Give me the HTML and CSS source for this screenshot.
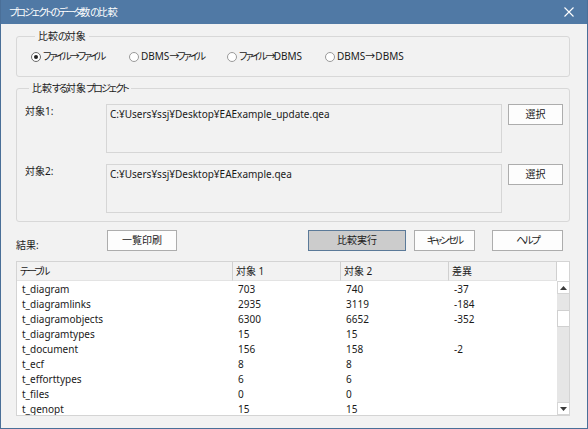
FILE: index.html
```html
<!DOCTYPE html>
<html lang="ja">
<head>
<meta charset="utf-8">
<title>プロジェクトのデータ数の比較</title>
<link rel="stylesheet" href="styles.css">
</head>
<body>
<div class="window">
  <div class="titlebar">
    <span class="title"><span class="k">プロジェクトのデータ</span>数<span class="k">の</span>比較</span>
    <svg class="close" width="10" height="10" viewBox="0 0 10 10"><path d="M0.5 0.5L9.5 9.5M9.5 0.5L0.5 9.5" stroke="#ffffff" stroke-width="1.1" fill="none"/></svg>
  </div>
  <div class="content">
    <fieldset class="group group-target">
      <legend>比較<span class="k">の</span>対象</legend>
      <div class="radios">
        <label class="radio"><span class="dot checked"></span><span class="k">ファイル→ファイル</span></label>
        <label class="radio"><span class="dot"></span>DBMS<span class="k">→ファイル</span></label>
        <label class="radio"><span class="dot"></span><span class="k">ファイル→</span>DBMS</label>
        <label class="radio"><span class="dot"></span>DBMS→DBMS</label>
      </div>
    </fieldset>
    <fieldset class="group group-projects">
      <legend>比較<span class="k">する</span>対象<span class="k">プロジェクト</span></legend>
      <div class="proj-row">
        <span class="proj-label">対象1:</span>
        <div class="path-box">C:¥Users¥ssj¥Desktop¥EAExample_update.qea</div>
        <button class="btn btn-select">選択</button>
      </div>
      <div class="proj-row">
        <span class="proj-label">対象2:</span>
        <div class="path-box">C:¥Users¥ssj¥Desktop¥EAExample.qea</div>
        <button class="btn btn-select">選択</button>
      </div>
    </fieldset>
    <div class="action-row">
      <span class="result-label">結果:</span>
      <button class="btn btn-print">一覧印刷</button>
      <span class="spacer"></span>
      <button class="btn btn-run">比較実行</button>
      <button class="btn btn-cancel"><span class="k">キャンセル</span></button>
      <button class="btn btn-help"><span class="k">ヘルプ</span></button>
    </div>
    <div class="list">
      <div class="list-head">
        <div class="th"><span class="k">テーブル</span></div>
        <div class="th">対象 1</div>
        <div class="th">対象 2</div>
        <div class="th">差異</div>
        <div class="th-blank"></div>
      </div>
      <div class="list-body">
        <div class="rows">
          <div class="row"><span>t_diagram</span><span>703</span><span>740</span><span>-37</span></div>
          <div class="row"><span>t_diagramlinks</span><span>2935</span><span>3119</span><span>-184</span></div>
          <div class="row"><span>t_diagramobjects</span><span>6300</span><span>6652</span><span>-352</span></div>
          <div class="row"><span>t_diagramtypes</span><span>15</span><span>15</span><span></span></div>
          <div class="row"><span>t_document</span><span>156</span><span>158</span><span>-2</span></div>
          <div class="row"><span>t_ecf</span><span>8</span><span>8</span><span></span></div>
          <div class="row"><span>t_efforttypes</span><span>6</span><span>6</span><span></span></div>
          <div class="row"><span>t_files</span><span>0</span><span>0</span><span></span></div>
          <div class="row"><span>t_genopt</span><span>15</span><span>15</span><span></span></div>
        </div>
        <div class="scrollbar">
          <div class="sb-btn"><svg width="7" height="4" viewBox="0 0 7 4"><path d="M0 4L3.5 0L7 4Z" fill="#3a3a3a"/></svg></div>
          <div class="sb-track">
            <div class="sb-gap"></div>
            <div class="sb-thumb"></div>
          </div>
          <div class="sb-btn"><svg width="7" height="4" viewBox="0 0 7 4"><path d="M0 0L3.5 4L7 0Z" fill="#3a3a3a"/></svg></div>
        </div>
      </div>
    </div>
  </div>
</div>
</body>
</html>
```
FILE: styles.css
```css
* { box-sizing: border-box; }
html, body { margin: 0; padding: 0; }
body {
  font-family: "Noto Sans", "Noto Sans CJK JP", sans-serif;
  font-size: 10px;
  font-feature-settings: "palt" 1;
  color: #1a1a1a;
  background: #f0f0f0;
}
.k { letter-spacing: -2px; }
.window {
  width: 588px;
  height: 429px;
  background: #f2f2f2;
  border: 1px solid #4a6f98;
  border-top: none;
  overflow: hidden;
}
.titlebar {
  height: 24px;
  background: #5079a5;
  color: #ffffff;
  display: flex;
  align-items: center;
  justify-content: space-between;
  padding: 0 14px 0 9px;
  margin: 0 -1px;
}
.title { line-height: 14px; white-space: nowrap; }
.close { display: block; }
.content {
  padding: 5px 17px 0 15px;
}
.group {
  margin: 0;
  border: 1px solid #d8d8d8;
  border-radius: 3px;
  min-width: 0;
}
.group legend {
  padding: 0 3px;
  margin-left: 4px;
  line-height: 15px;
  color: #1a1a1a;
  white-space: nowrap;
}
.group-target {
  padding: 5px 0 12px 14px;
}
.radios { display: flex; }
.radio {
  width: 98px;
  flex: none;
  display: flex;
  align-items: center;
  line-height: 15px;
  white-space: nowrap;
}
.dot {
  width: 10px;
  height: 10px;
  border-radius: 50%;
  border: 1px solid #9a9a9a;
  background: #ffffff;
  margin-right: 2px;
  flex: none;
  display: flex;
  align-items: center;
  justify-content: center;
}
.dot.checked { border-color: #6a6a6a; }
.dot.checked::after {
  content: "";
  width: 4px;
  height: 4px;
  border-radius: 50%;
  background: #222222;
}
.group-projects {
  margin-top: 4px;
  padding: 8px 6px 8px 8px;
}
.proj-row {
  display: flex;
  align-items: flex-start;
}
.proj-row + .proj-row { margin-top: 11px; }
.proj-label {
  width: 81px;
  line-height: 15px;
  flex: none;
}
.path-box {
  width: 396px;
  height: 49px;
  border: 1px solid #d6d6d6;
  background: #f2f2f2;
  padding: 2px 3px;
  line-height: 15px;
  flex: none;
  white-space: nowrap;
  overflow: hidden;
}
.btn {
  font-family: inherit;
  font-size: inherit;
  font-feature-settings: "palt" 1;
  color: #1a1a1a;
  background: #fdfdfd;
  border: 1px solid #adadad;
  border-radius: 0;
  padding: 0;
  height: 21px;
  line-height: 19px;
  flex: none;
  white-space: nowrap;
}
.btn-select { width: 55px; margin-left: 6px; }
.action-row {
  display: flex;
  align-items: flex-start;
  margin-top: 8px;
  height: 31px;
  padding-right: 7px;
}
.result-label {
  width: 91px;
  flex: none;
  margin-top: 8px;
  line-height: 15px;
}
.btn-print { width: 70px; }
.spacer { flex: 1; }
.btn-run {
  width: 98px;
  background: #cccccc;
  border-color: #5b7a99;
}
.btn-cancel { width: 61px; margin-left: 8px; }
.btn-help { width: 71px; margin-left: 17px; }
.list {
  border: 1px solid #d4d4d4;
  background: #ffffff;
  height: 155px;
  overflow: hidden;
}
.list-head {
  display: grid;
  grid-template-columns: 216px 108px 108px 108px 1fr;
  height: 19px;
}
.th {
  background: #f2f2f2;
  border-right: 1px solid #d0d0d0;
  border-bottom: 1px solid #e3e3e3;
  padding-left: 3px;
  line-height: 18px;
  white-space: nowrap;
}
.th-blank { background: #ffffff; }
.list-body {
  display: flex;
  height: 134px;
}
.rows { flex: 1; padding-top: 1px; }
.row {
  display: grid;
  grid-template-columns: 216px 108px 108px 108px;
  height: 15px;
  line-height: 15px;
}
.row span { padding-left: 5px; white-space: nowrap; }
.scrollbar {
  width: 13px;
  flex: none;
  display: flex;
  flex-direction: column;
  background: #e6e6e6;
}
.sb-btn {
  height: 13px;
  background: #ffffff;
  border: 1px solid #d6d6d6;
  display: flex;
  align-items: center;
  justify-content: center;
  flex: none;
}
.sb-track { flex: 1; display: flex; flex-direction: column; }
.sb-gap { height: 16px; }
.sb-thumb {
  height: 17px;
  background: #ffffff;
  border: 1px solid #d0d0d0;
}
```
